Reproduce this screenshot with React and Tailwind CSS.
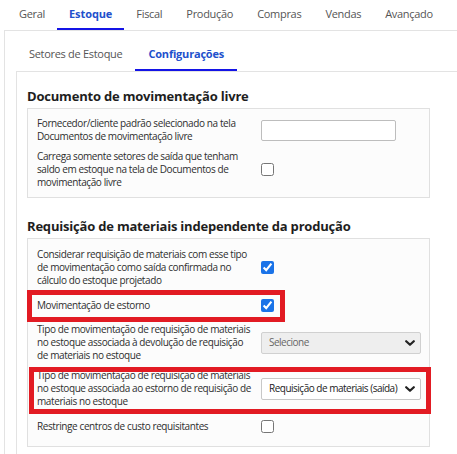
import React from "react";

const topTabs = ["Geral", "Estoque", "Fiscal", "Produção", "Compras", "Vendas", "Avançado"];

const Chevron = () => (
  <svg width="10" height="6" viewBox="0 0 10 6" className="shrink-0">
    <path d="M1.2 1.2 L5 4.8 L8.8 1.2" fill="none" stroke="#222" strokeWidth="2.2" strokeLinecap="round" strokeLinejoin="round" />
  </svg>
);

const Label = ({ lines }) => (
  <div className="w-[216px] shrink-0 text-[10px] leading-[13px] tracking-[-0.4px] text-[#2e2e2e]">
    {lines.map((line) => (
      <div key={line} className="whitespace-nowrap">
        {line}
      </div>
    ))}
  </div>
);

const Row = ({ lines, children, single }) => (
  <div className={`flex items-center ${single ? "min-h-[22px]" : ""}`}>
    <Label lines={lines} />
    <div className="ml-[8px] flex items-center">{children}</div>
  </div>
);

const Checkbox = ({ checked }) => (
  <input type="checkbox" defaultChecked={checked} className="w-[13px] h-[13px] m-0 accent-[#1a73e8]" />
);

const Select = ({ value, disabled }) => (
  <div
    className={`w-[160px] h-[22px] flex items-center justify-between pl-[7px] pr-[5px] border rounded-[2px] text-[10px] tracking-[-0.5px] ${
      disabled ? "bg-[#eeeeee] border-[#d0d0d0] text-[#666]" : "bg-white border-[#c8c8c8] text-[#222]"
    }`}
  >
    <span className="whitespace-nowrap">{value}</span>
    <Chevron />
  </div>
);

const Box = ({ children, className = "" }) => (
  <div className={`relative w-[403px] border border-[#e0e0e0] bg-[#fcfcfc] pl-[9px] flex flex-col gap-[7px] ${className}`}>
    {children}
  </div>
);

const Heading = ({ children }) => (
  <h2 className="text-[13px] leading-[18px] font-bold tracking-[-0.2px] text-[#1e1e1e] mb-[3px] whitespace-nowrap">
    {children}
  </h2>
);

const App = () => {
  return (
    <div className="w-[457px] h-[454px] overflow-hidden bg-white font-['Open_Sans',sans-serif]">
      {/* abas principais */}
      <div className="flex h-[30px] pl-[7px]">
        {topTabs.map((tab) => (
          <div
            key={tab}
            className={`px-[12px] flex items-center text-[11px] whitespace-nowrap ${
              tab === "Estoque"
                ? "font-bold text-[#2250cc] border-b-2 border-[#1414e6] tracking-[-0.1px]"
                : "text-[#555] tracking-[-0.3px] border-b-2 border-transparent"
            }`}
          >
            {tab}
          </div>
        ))}
      </div>

      <div className="ml-[4px] border-l border-t border-[#e3e3e3] pl-[11px]">
        {/* sub abas */}
        <div className="flex h-[40px] pt-[8px]">
          <div className="px-[13px] flex items-center text-[11px] tracking-[-0.3px] text-[#555] border-b-2 border-transparent whitespace-nowrap">
            Setores de Estoque
          </div>
          <div className="px-[13px] flex items-center text-[11px] tracking-[-0.2px] font-bold text-[#2250cc] border-b-2 border-[#1414e6] whitespace-nowrap">
            Configurações
          </div>
        </div>

        <div className="border-l border-t border-[#e3e3e3] pl-[10px] pt-[15px] h-[400px]">
          <Heading>Documento de movimentação livre</Heading>
          <Box className="pt-[8px] pb-[8px] mb-[19px]">
            <Row lines={["Fornecedor/cliente padrão selecionado na tela", "Documentos de movimentação livre"]}>
              <div className="w-[135px] h-[21px] bg-white border border-[#bdbdbd] rounded-[2px]" />
            </Row>
            <Row
              lines={[
                "Carrega somente setores de saída que tenham",
                "saldo em estoque na tela de Documentos de",
                "movimentação livre",
              ]}
            >
              <Checkbox />
            </Row>
          </Box>

          <Heading>Requisição de materiais independente da produção</Heading>
          <Box className="pt-[9px] pb-[9px]">
            <Row
              lines={[
                "Considerar requisição de materiais com esse tipo",
                "de movimentação como saída confirmada no",
                "cálculo do estoque projetado",
              ]}
            >
              <Checkbox checked />
            </Row>
            <Row lines={["Movimentação de estorno"]} single>
              <Checkbox checked />
            </Row>
            <Row
              lines={[
                "Tipo de movimentação de requisição de materiais",
                "no estoque associada à devolução de requisição",
                "de materiais no estoque",
              ]}
            >
              <Select value="Selecione" disabled />
            </Row>
            <Row
              lines={[
                "Tipo de movimentação de requisição de materiais",
                "no estoque associada ao estorno de requisição de",
                "materiais no estoque",
              ]}
            >
              <Select value="Requisição de materiais (saída)" />
            </Row>
            <Row lines={["Restringe centros de custo requisitantes"]} single>
              <Checkbox />
            </Row>

            {/* destaques em vermelho */}
            <div className="absolute left-[-1px] top-[51px] w-[258px] h-[32px] border-[5px] border-[#e21b23] pointer-events-none" />
            <div className="absolute left-[1px] top-[128px] w-[402px] h-[47px] border-[5px] border-[#e21b23] pointer-events-none" />
          </Box>
        </div>
      </div>
    </div>
  );
};

export default App;
